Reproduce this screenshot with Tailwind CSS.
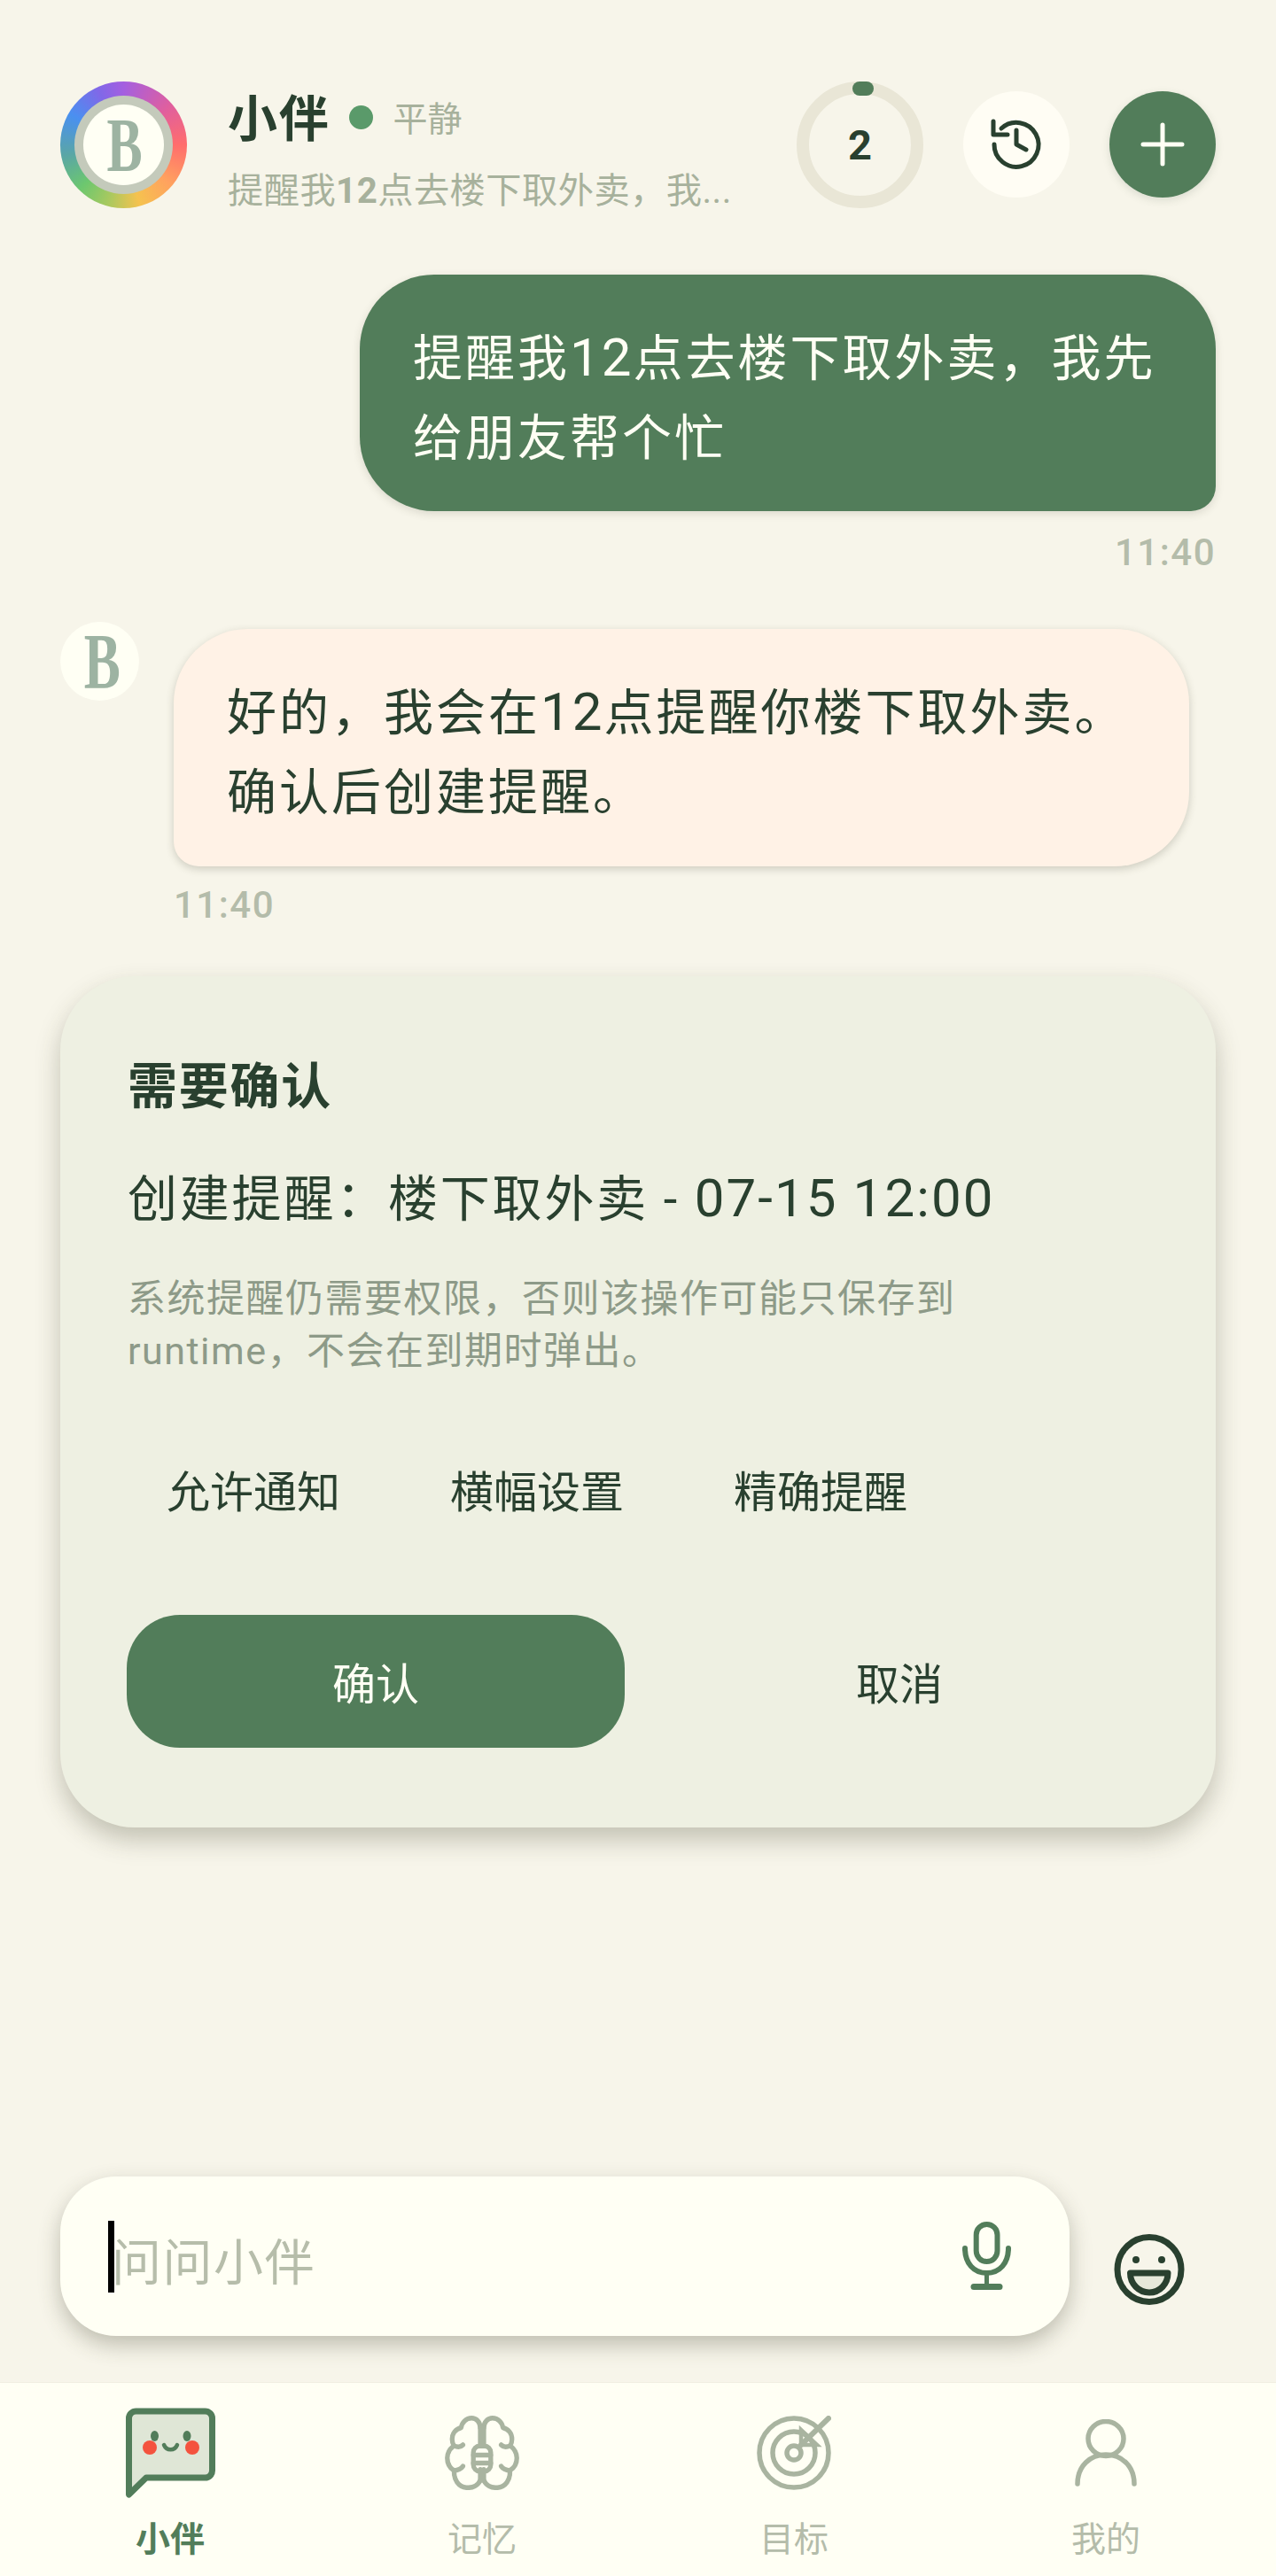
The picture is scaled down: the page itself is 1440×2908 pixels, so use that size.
<!doctype html>
<html lang="zh"><head><meta charset="utf-8"><script src="https://cdn.jsdelivr.net/npm/@tailwindcss/browser@4"></script></head>
<body class="m-0 bg-[#f7f5ea]">
<div class="w-[1440px] h-[2908px] flex flex-col overflow-hidden bg-[#f7f5ea] text-[#29402f] font-['Roboto','Noto_Sans_CJK_SC',sans-serif]">
  <!-- header -->
  <header class="h-[310px] shrink-0 pt-[92px] pl-[68px] pr-[68px] flex items-start">
    <div class="w-[143px] h-[143px] rounded-full shrink-0 flex items-center justify-center bg-[conic-gradient(from_0deg,#a45fe0_0deg,#e05f9e_50deg,#ff6d6d_90deg,#ffa25f_130deg,#f5c24f_165deg,#a8c95f_195deg,#6cc76f_225deg,#5aa6a6_260deg,#4a90f0_300deg,#8068e8_335deg,#a45fe0_360deg)]">
      <div class="w-[111px] h-[111px] rounded-full bg-[#c4cabb] flex items-center justify-center">
        <div class="w-[91px] h-[91px] rounded-full bg-[#fffff4] flex items-center justify-center text-[86px] leading-none text-[#9db3a2] font-bold font-['Liberation_Serif',serif]"><span class="inline-block ml-[3px] scale-x-[0.7]">B</span></div>
      </div>
    </div>
    <div class="ml-[46px] w-[575px] shrink-0 flex flex-col">
      <div class="flex items-center h-[64px] mt-[11px]">
        <span class="text-[56px] leading-none font-bold tracking-[1.75px]">小伴</span>
        <span class="ml-[21px] -mt-[6px] w-[27px] h-[27px] rounded-full bg-[#5a9a6a]"></span>
        <span class="ml-[23px] text-[39px] leading-none text-[#a7b19c]">平静</span>
      </div>
      <div class="mt-[23px] text-[40.25px] leading-[52px] tracking-[0.45px] text-[#a7b19c] whitespace-nowrap">提醒我<span class="font-bold">12</span>点去楼下取外卖，我...</div>
    </div>
    <div class="relative ml-[67px] w-[143px] h-[143px] shrink-0 rounded-full border-[14px] border-[#e9e6d6] flex items-center justify-center">
      <span class="text-[47px] leading-none font-bold">2</span>
      <span class="absolute -top-[14px] left-[49px] w-[24px] h-[16px] rounded-full bg-[#527d5a]"></span>
    </div>
    <div class="ml-[45px] mt-[11px] w-[120px] h-[120px] shrink-0 rounded-full bg-[#fffdf4] flex items-center justify-center">
      <svg class="w-[64px] h-[64px]" viewBox="0 0 64 64" fill="none" stroke="#29402f" stroke-width="5" stroke-linecap="round" stroke-linejoin="round"><path d="M15 14A25 25 0 1 1 7 32"/><path d="M6 6V21H22"/><path d="M32 16V32L43 38"/></svg>
    </div>
    <div class="ml-[45px] mt-[11px] w-[120px] h-[120px] shrink-0 rounded-full bg-[#527d5a] shadow-[0_3px_10px_rgba(60,80,60,0.15)] flex items-center justify-center">
      <svg class="w-[52px] h-[52px]" viewBox="0 0 52 52" fill="none" stroke="#fffff4" stroke-width="5" stroke-linecap="round"><path d="M26 4v44M4 26h44"/></svg>
    </div>
  </header>

  <main class="flex-1 flex flex-col px-[68px]">
    <div class="self-end w-[966px] h-[267px] bg-[#527d5a] text-[#fffff4] rounded-[84px] rounded-br-[28px] pt-[49px] pl-[60px] text-[56px] tracking-[3px] leading-[90px] shrink-0 shadow-[0_3px_10px_rgba(60,60,40,0.15)]">提醒我<span class="text-[60px] tracking-[2px]">12</span>点去楼下取外卖，我先<br>给朋友帮个忙</div>
    <div class="self-end mt-[21px] text-[42px] leading-[52px] font-medium tracking-[1.5px] text-[#b4bcaa]">11:40</div>
    <div class="mt-[52px] flex items-start">
      <div class="w-[89px] h-[89px] rounded-full bg-[#fffff4] flex items-center justify-center text-[88px] leading-none text-[#9db3a2] font-bold font-['Liberation_Serif',serif] shrink-0"><span class="inline-block ml-[5px] scale-x-[0.7]">B</span></div>
      <div class="ml-[39px] mt-[8px] w-[1146px] h-[268px] bg-[#fff2e6] rounded-[84px] rounded-bl-[28px] pt-[49px] pl-[60px] text-[56px] tracking-[3px] leading-[90px] shadow-[0_3px_10px_rgba(60,60,40,0.22)] shrink-0">好的，我会在<span class="text-[60px] tracking-[2px]">12</span>点提醒你楼下取外卖。<br>确认后创建提醒。</div>
    </div>
    <div class="ml-[128px] mt-[18px] text-[42px] leading-[52px] font-medium tracking-[1.5px] text-[#b4bcaa]">11:40</div>

    <section class="mt-[54px] w-[1304px] h-[961px] rounded-[84px] bg-[#eef0e2] shadow-[0_14px_28px_rgba(60,60,40,0.28)] px-[76px] pt-[92px] shrink-0">
      <h2 class="text-[56px] leading-[66px] font-bold tracking-[1.75px]">需要确认</h2>
      <p class="mt-[55px] text-[56px] leading-[76px] tracking-[2.8px] whitespace-nowrap">创建提醒：楼下取外卖 - <span class="text-[60px] tracking-[2.1px]">07-15 12:00</span></p>
      <p class="mt-[45px] text-[43px] leading-[59px] tracking-[1.5px] text-[#8d9a88] w-[1000px]">系统提醒仍需要权限，否则该操作可能只保存到<br>runtime，不会在到期时弹出。</p>
      <div class="mt-[96px] flex gap-[124px] pl-[44px] text-[49px] leading-[70px] whitespace-nowrap">
        <span>允许通知</span><span>横幅设置</span><span>精确提醒</span>
      </div>
      <div class="mt-[102px] -ml-[1px] flex items-center">
        <div class="w-[562px] h-[150px] pt-[10px] rounded-[60px] bg-[#527d5a] text-[#fffff4] flex items-center justify-center text-[49px]">确认</div>
        <div class="ml-[29px] w-[562px] h-[150px] pt-[10px] flex items-center justify-center text-[49px]">取消</div>
      </div>
    </section>

    <div class="flex-1"></div>
    <div class="flex items-start mb-[52px]">
      <div class="relative w-[1139px] h-[180px] rounded-[63px] bg-[#fffff4] shadow-[0_10px_24px_rgba(60,60,40,0.3)] flex items-center justify-between pl-[54px] pr-[66px] shrink-0">
        <div class="flex items-center">
          <span class="w-[7px] h-[81px] bg-black shrink-0"></span>
          <span class="mt-[15px] text-[56px] leading-none tracking-[1.5px] text-[#b6bdaa] -ml-[3px]">问问小伴</span>
        </div>
        <svg class="w-[55px] h-[78px]" viewBox="0 0 55 78" fill="none" stroke="#527d5a" stroke-linecap="round"><rect x="15.700" y="3" width="23.800" height="42" rx="11.900" stroke-width="6"/><path d="M3 30c0 17 10 28 24.500 28S52 47 52 30" stroke-width="6"/><path d="M27.500 58v14" stroke-width="5"/><path d="M13 73.500h29" stroke-width="7"/></svg>
      </div>
      <svg class="ml-[50px] mt-[65px] w-[80px] h-[80px]" viewBox="0 0 80 80" fill="none"><ellipse cx="40" cy="40" rx="36" ry="36.500" stroke="#29402f" stroke-width="7"/><circle cx="25" cy="29" r="4" fill="#29402f"/><circle cx="54" cy="29" r="4" fill="#29402f"/><path d="M18.500 44H61c0 12-9 22-21 22S18.500 56 18.500 44z" stroke="#29402f" stroke-width="7" stroke-linejoin="round" fill="#e6e9da"/></svg>
    </div>
  </main>

  <nav class="h-[219px] shrink-0 bg-[#fffff4] border-t border-[#f0eee2] grid grid-cols-4 px-[16px]">
    <div class="flex flex-col items-center">
      <svg class="mt-[28px] w-[101px] h-[102px]" viewBox="0 0 101 102" fill="none"><path d="M3.500 12a8 8 0 0 1 8-8h78a8 8 0 0 1 8 8v59a8 8 0 0 1-8 8H23L3.500 98z" fill="#dfe6d6" stroke="#527d5a" stroke-width="7" stroke-linejoin="round"/><ellipse cx="32.500" cy="32" rx="4.500" ry="6" fill="#527d5a"/><ellipse cx="69" cy="32" rx="4.500" ry="6" fill="#527d5a"/><circle cx="27" cy="45" r="8" fill="#f4533e"/><circle cx="75" cy="45" r="8" fill="#f4533e"/><path d="M43 42c3 7 12 7 15 0" stroke="#527d5a" stroke-width="4.500" stroke-linecap="round"/></svg>
      <span class="mt-[22px] text-[39px] leading-[50px] font-bold text-[#527d5a]">小伴</span>
    </div>
    <div class="flex flex-col items-center">
      <svg class="mt-[37px] w-[84px] h-[84px]" viewBox="1.300 1.100 21.400 20.600" preserveAspectRatio="none" fill="none" stroke="#a9b4a0" stroke-width="1.350" stroke-linecap="round" stroke-linejoin="round"><path d="M11.500 4.500C11.500 2.800 10.300 1.800 9 1.800 7.400 1.800 6.200 3 6 4.400 4.400 4.800 3.400 6 3.400 7.600c0 .7.200 1.300.5 1.800C2.700 10.300 2 11.500 2 12.800c0 1.500.8 2.800 2 3.500-.2 2.500 1.200 4.500 3.500 4.700 1.800.2 3.300-.6 4-2"/><path d="M12.500 4.500C12.500 2.800 13.700 1.800 15 1.800c1.600 0 2.800 1.200 3 2.600 1.600.4 2.600 1.600 2.600 3.200 0 .7-.2 1.300-.5 1.800 1.200.9 1.900 2.100 1.900 3.400 0 1.500-.8 2.800-2 3.500.2 2.500-1.200 4.500-3.500 4.700-1.800.2-3.300-.6-4-2"/><path d="M11.500 4.500v5M12.500 4.500v5M11.500 16v3M12.500 16v3"/><rect x="9.500" y="9.500" width="5" height="7" rx="1.800"/><path d="M9.500 12h5M9.500 14.200h5"/><path d="M3.900 9.400c1 .5 2 .4 2.600-.2M20.100 9.400c-1 .5-2 .4-2.600-.2M4 16.300c1-.1 2-.5 2.500-1.200M20 16.300c-1-.1-2-.5-2.500-1.200"/></svg>
      <span class="mt-[31px] text-[39px] leading-[50px] text-[#b4bcaa]">记忆</span>
    </div>
    <div class="flex flex-col items-center">
      <svg class="mt-[37px] w-[84px] h-[84px]" viewBox="0 0 84 84" fill="none" stroke="#a9b4a0" stroke-width="5.500"><circle cx="42" cy="42" r="39"/><circle cx="42" cy="42" r="24"/><circle cx="42" cy="42" r="8"/><path d="M50 16v17h18z" stroke-width="4.500"/><path d="M50 33 81 3" stroke-width="6" stroke-linecap="round"/></svg>
      <span class="mt-[31px] text-[39px] leading-[50px] text-[#b4bcaa]">目标</span>
    </div>
    <div class="flex flex-col items-center">
      <svg class="mt-[41px] w-[72px] h-[76px]" viewBox="0 0 72 76" fill="none" stroke="#a9b4a0" stroke-width="5.500" stroke-linecap="round"><ellipse cx="36" cy="22" rx="20" ry="19.500"/><path d="M4 73c0-20 14-33 32-33s32 13 32 33"/></svg>
      <span class="mt-[35px] text-[39px] leading-[50px] text-[#b4bcaa]">我的</span>
    </div>
  </nav>
</div>
</body></html>
